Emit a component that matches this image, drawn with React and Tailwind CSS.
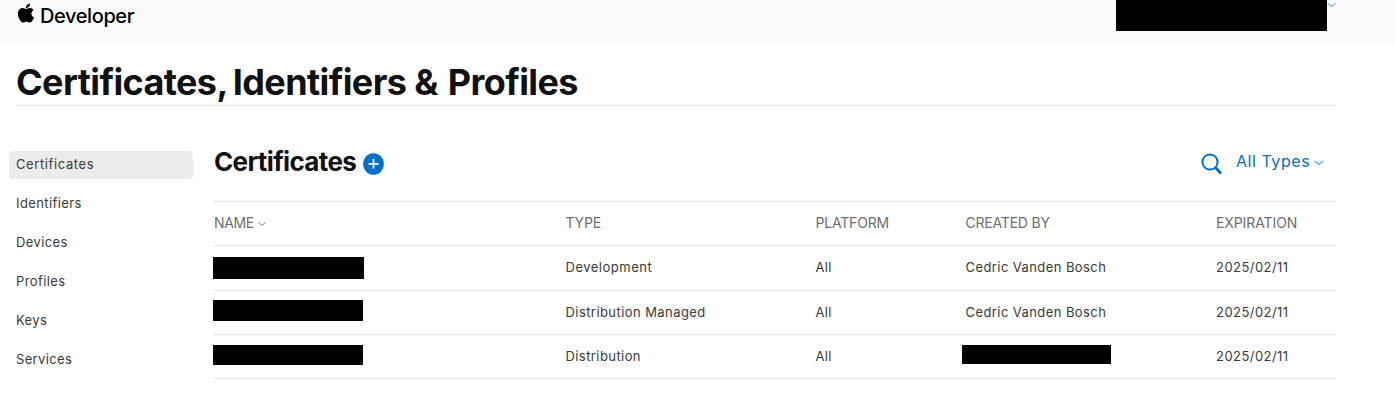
import React from "react";
import { FaApple } from "react-icons/fa";

const navItems = [
  { label: "Certificates", spacing: "tracking-[0.6px]" },
  { label: "Identifiers", spacing: "tracking-[0.4px]" },
  { label: "Devices", spacing: "tracking-[0.4px]" },
  { label: "Profiles", spacing: "tracking-[0.4px]" },
  { label: "Keys", spacing: "tracking-[0.4px]" },
  { label: "Services", spacing: "tracking-[0.35px]" },
];

const rows = [
  {
    height: "h-[45px]",
    name: "mt-[11px] h-[22px] w-[151px]",
    type: "Development",
    typeSpacing: "tracking-[0.5px]",
    createdBy: "Cedric Vanden Bosch",
  },
  {
    height: "h-[44px]",
    name: "mt-[9px] h-[21px] w-[150px]",
    type: "Distribution Managed",
    typeSpacing: "tracking-[0.43px]",
    createdBy: "Cedric Vanden Bosch",
  },
  {
    height: "h-[44px]",
    name: "mt-[10px] h-[20px] w-[150px]",
    type: "Distribution",
    typeSpacing: "tracking-[0.42px]",
    createdBy: null,
  },
];

function Chevron({ className }) {
  return (
    <svg className={className} viewBox="0 0 10 6" fill="none" stroke="currentColor" strokeWidth="1.3" strokeLinecap="round" strokeLinejoin="round">
      <path d="M1 1.2 L5 4.6 L9 1.2" />
    </svg>
  );
}

function Header() {
  return (
    <header className="flex h-[44px] items-start justify-between bg-[#fafafa] pl-[17px] pr-[59px]">
      <div className="flex items-start text-black">
        <FaApple className="mt-[2px] h-[22px] w-[18px]" />
        <span className="ml-[5px] mt-[4px] text-[20px] leading-[24px] font-medium tracking-[-0.4px]">Developer</span>
      </div>
      <div className="flex items-start">
        <div className="h-[31px] w-[211px] bg-black" />
        <Chevron className="mt-[2px] h-[6px] w-[9px] text-[#7ab2e0]" />
      </div>
    </header>
  );
}

function Sidebar() {
  return (
    <nav className="ml-[9px] flex w-[184px] flex-col gap-[11px] pt-[45px]">
      {navItems.map((item, i) => (
        <a
          key={item.label}
          className={
            "flex h-[28px] items-center rounded-[4px] pl-[7px] text-[13px] text-[#3a3a3a] " +
            item.spacing +
            (i === 0 ? " bg-[#ececec]" : "")
          }
        >
          {item.label}
        </a>
      ))}
    </nav>
  );
}

function TableGrid({ className, children }) {
  return (
    <div className={"grid grid-cols-[351.5px_250px_150px_250.5px_1fr] border-b border-[#e3e3e3] " + className}>
      {children}
    </div>
  );
}

export default function App() {
  return (
    <div className="h-[420px] w-[1395px] overflow-hidden bg-white font-['Inter',sans-serif] text-[#111111]">
      <Header />
      <div className="ml-[16px] h-[62px] w-[1320px] border-b border-[#e3e3e3] pt-[16px]">
        <h1 className="text-[36px] leading-[44px] font-[650] tracking-[-0.6px] whitespace-nowrap">
          Certificates, <span className="-ml-[2px] mr-[2px]">Identifiers &amp;</span> Profiles
        </h1>
      </div>
      <div className="flex">
        <Sidebar />
        <main className="ml-[21px] w-[1122px]">
          <div className="flex h-[95px] items-start justify-between pr-[12px]">
            <div className="flex items-start">
              <h2 className="mt-[40px] w-[142px] text-[26px] leading-[32px] font-[650] tracking-[-0.65px]">Certificates</h2>
              <svg className="ml-[7px] mt-[47px] h-[22px] w-[21px]" viewBox="0 0 21 22">
                <ellipse cx="10.5" cy="11" rx="10.4" ry="10.8" fill="#0070c9" />
                <path d="M10.5 6v9.6M5.5 10.8h10" stroke="#fff" strokeWidth="1.8" />
              </svg>
            </div>
            <div className="flex items-start text-[#0070c9]">
              <svg className="mt-[47px] h-[22px] w-[22px]" viewBox="0 0 22 22" fill="none" stroke="currentColor">
                <circle cx="9" cy="9" r="7.6" strokeWidth="2" />
                <path d="M14.2 14.2 L20 20.4" strokeWidth="2.9" />
              </svg>
              <span className="ml-[13px] mt-[43px] w-[74px] whitespace-nowrap text-[16px] leading-[24px] tracking-[0.55px]">All Types</span>
              <Chevron className="ml-[4px] mt-[54px] h-[6px] w-[10px] text-[#66a9df]" />
            </div>
          </div>
          <div className="border-t border-[#e3e3e3]">
            <TableGrid className="h-[44px] items-center pb-[2px] text-[14px] tracking-[-0.2px] text-[#6f6f6f]">
              <span className="flex items-center">
                <span className="tracking-[-0.35px]">NAME</span>
                <Chevron className="ml-[4px] mt-[3px] h-[6px] w-[8px] text-[#999999]" />
              </span>
              <span>TYPE</span>
              <span>PLATFORM</span>
              <span>CREATED BY</span>
              <span className="tracking-[-0.1px]">EXPIRATION</span>
            </TableGrid>
            {rows.map((row) => (
              <TableGrid key={row.type} className={"items-center text-[13px] text-[#3a3a3a] " + row.height}>
                <div className={"-ml-px self-start bg-black " + row.name} />
                <span className={row.typeSpacing}>{row.type}</span>
                <span className="tracking-[0.3px]">All</span>
                {row.createdBy ? (
                  <span className="tracking-[0.42px]">{row.createdBy}</span>
                ) : (
                  <div className="-ml-[3.5px] mt-[10px] h-[19px] w-[149px] self-start bg-black" />
                )}
                <span className="tracking-[0.45px]">2025/02/11</span>
              </TableGrid>
            ))}
          </div>
        </main>
      </div>
    </div>
  );
}
